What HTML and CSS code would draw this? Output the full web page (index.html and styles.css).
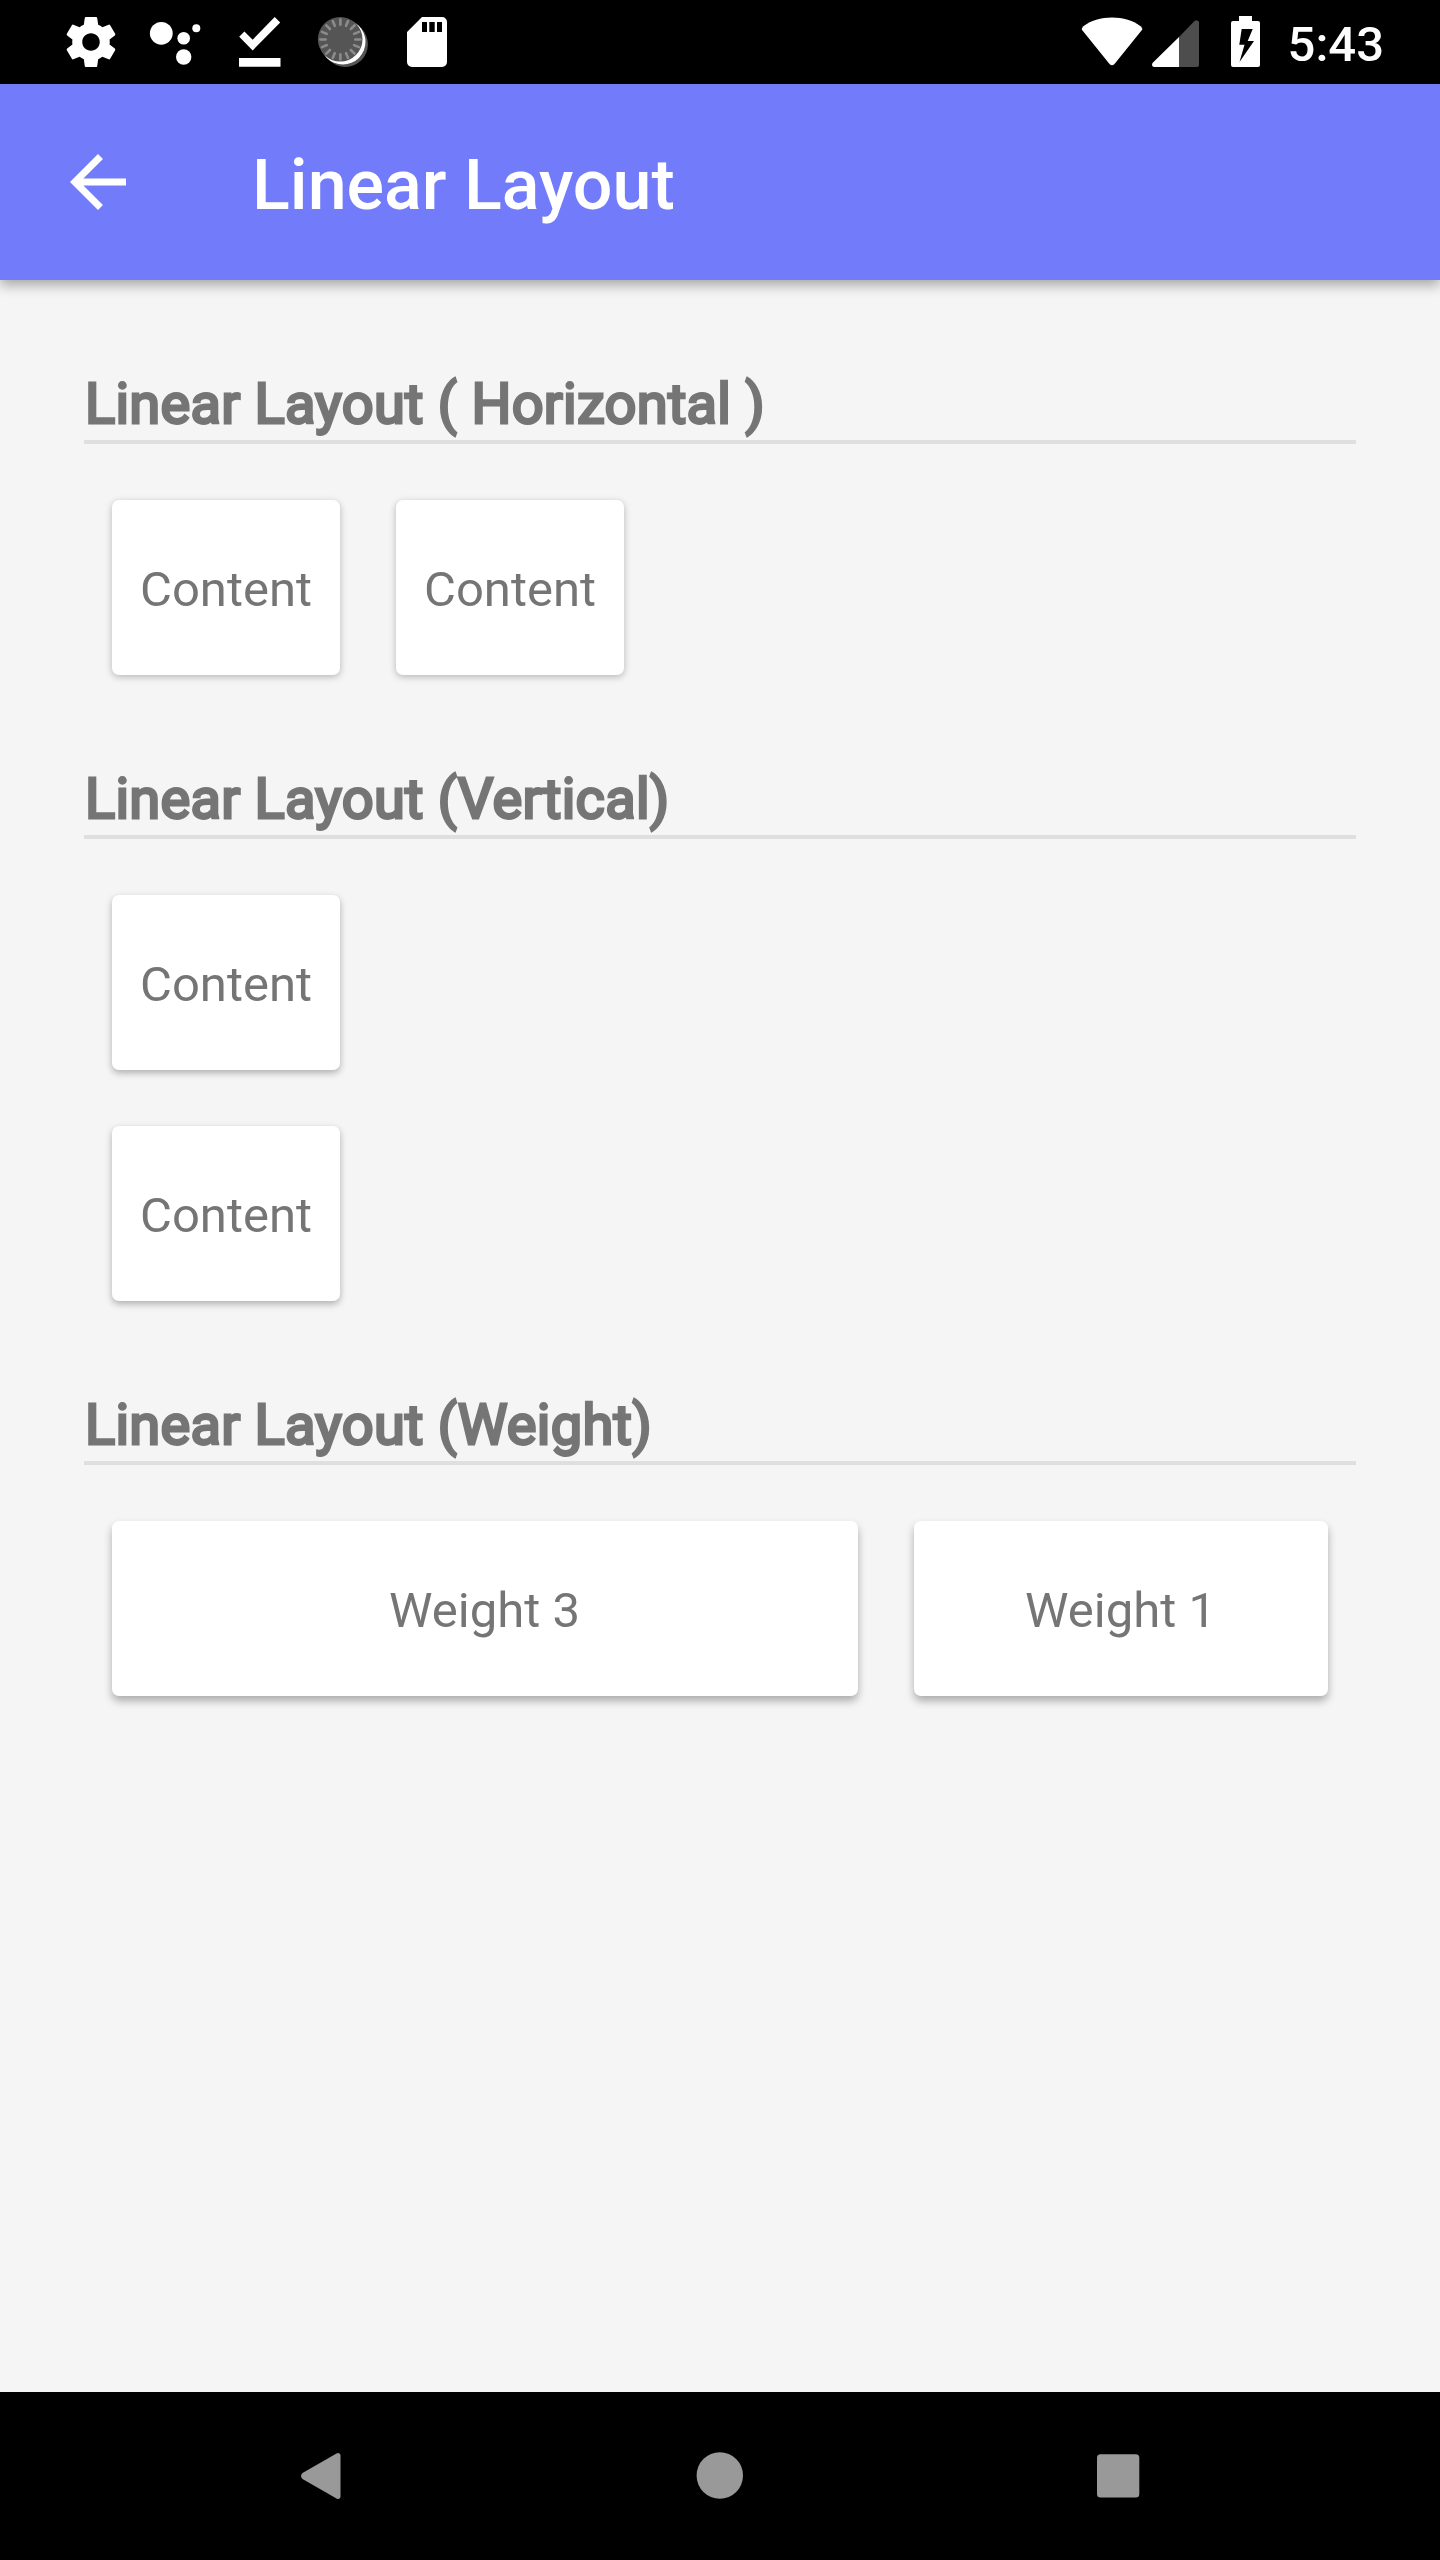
FILE: index.html
```html
<!DOCTYPE html>
<html lang="en">
<head>
<meta charset="utf-8">
<title>Linear Layout</title>
<link rel="stylesheet" href="styles.css">
</head>
<body>
<div class="screen">
  <div class="status-bar">
    <svg class="status-icons" width="400" height="84" viewBox="60 0 400 84" fill="#fff">
      <path transform="translate(61 12) scale(2.5)" d="M19.43 12.98c.04-.32.07-.64.07-.98s-.03-.66-.07-.98l2.11-1.65c.19-.15.24-.42.12-.64l-2-3.46c-.12-.22-.39-.3-.61-.22l-2.49 1c-.52-.4-1.08-.73-1.69-.98l-.38-2.65C14.46 2.18 14.25 2 14 2h-4c-.25 0-.46.18-.49.42l-.38 2.65c-.61.25-1.17.59-1.69.98l-2.49-1c-.23-.09-.49 0-.61.22l-2 3.46c-.13.22-.07.49.12.64l2.11 1.65c-.04.32-.07.65-.07.98s.03.66.07.98l-2.11 1.65c-.19.15-.24.42-.12.64l2 3.46c.12.22.39.3.61.22l2.49-1c.52.4 1.08.73 1.69.98l.38 2.65c.03.24.24.42.49.42h4c.25 0 .46-.18.49-.42l.38-2.65c.61-.25 1.17-.59 1.69-.98l2.49 1c.23.09.49 0 .61-.22l2-3.46c.12-.22.07-.49-.12-.64l-2.11-1.65zM12 15.5c-1.93 0-3.5-1.57-3.5-3.5s1.57-3.5 3.5-3.5 3.5 1.57 3.5 3.5-1.57 3.5-3.5 3.5z"/>
      <circle cx="161.3" cy="33.3" r="11.4"/>
      <circle cx="183.7" cy="38.3" r="6.3"/>
      <circle cx="196.3" cy="28.2" r="4"/>
      <circle cx="183.7" cy="57" r="7.7"/>
      <path d="M239.2 36.7l5.2-5.3 8.3 8.3L274.7 17l5.5 5.4-27.5 28zM239 58h41.5v8.8H239z"/>
      <circle cx="345.3" cy="44.3" r="22.6" fill="#555"/>
      <circle cx="342.8" cy="41.9" r="22.7"/>
      <circle cx="340.2" cy="39.3" r="22.3" fill="#555"/>
      <g stroke="#8c8c8c" stroke-width="2.6" stroke-linecap="round">
        <path id="tick" d="M340.4 19.5v5.2M340.4 54.3v5.2M320.4 39.5h5.2M355.2 39.5h5.2"/>
        <use href="#tick" transform="rotate(22.5 340.4 39.5)"/>
        <use href="#tick" transform="rotate(45 340.4 39.5)"/>
        <use href="#tick" transform="rotate(67.5 340.4 39.5)"/>
      </g>
      <path fill-rule="evenodd" d="M422 17h20a5 5 0 0 1 5 5v40a5 5 0 0 1-5 5h-30a5 5 0 0 1-5-5V32zM422 22v10h5V22zM429.3 22v10h5.4V22zM437 22v10h5V22z"/>
    </svg>
    <div class="status-end">
      <svg width="180" height="84" viewBox="1081 0 180 84" fill="#fff">
        <path d="M1083 26.5C1098 14.5 1126 14.5 1141 26.5Q1143 28.5 1141.5 30.5L1114.5 64Q1112 66.5 1109.5 64L1082.5 30.5Q1081 28.5 1083 26.5z"/>
        <path fill="#4d4d4d" d="M1179 37L1194.5 21Q1197 19 1199 22V65q0 2-2 2h-18z"/>
        <path d="M1179 37v30h-25q-3-1-1.5-4z"/>
        <path fill-rule="evenodd" d="M1239 16h13v5h6q2 0 2 2v42q0 2-2 2h-25q-2 0-2-2V23q0-2 2-2h6zM1241.7 29l-2.4 15.7h5.2L1239.5 62l14.5-21h-6.3l5-12z"/>
      </svg>
      <span class="clock">5:43</span>
    </div>
  </div>

  <header class="app-bar">
    <svg width="84" height="84" viewBox="0 0 24 24" fill="#fff"><path d="M20 11H7.83l5.59-5.59L12 4l-8 8 8 8 1.41-1.41L7.83 13H20v-2z"/></svg>
    <h1 class="app-title">Linear Layout</h1>
  </header>

  <main class="content">
    <section class="group">
      <h2 class="heading">Linear Layout ( Horizontal )</h2>
      <div class="cards">
        <div class="card">Content</div>
        <div class="card">Content</div>
      </div>
    </section>
    <section class="group">
      <h2 class="heading">Linear Layout (Vertical)</h2>
      <div class="cards cards-vertical">
        <div class="card mid">Content</div>
        <div class="card mid">Content</div>
      </div>
    </section>
    <section class="group">
      <h2 class="heading">Linear Layout (Weight)</h2>
      <div class="cards cards-weighted">
        <div class="card low">Weight 3</div>
        <div class="card low">Weight 1</div>
      </div>
    </section>
  </main>

  <nav class="nav-bar">
    <svg width="840" height="168" viewBox="300 2392 840 168" fill="#999">
      <path d="M340.5 2455v42q-1 3-4 1.5L302.5 2479q-3-3 0-6L336.5 2453.5q3-1.5 4 1.5z"/>
      <circle cx="719.8" cy="2475.5" r="23.2"/>
      <rect x="1097" y="2454.3" width="42.3" height="43.2" rx="3.5"/>
    </svg>
  </nav>
</div>
</body>
</html>
```
FILE: styles.css
```css
* { box-sizing: border-box; }

body {
  margin: 0;
  background: #f5f5f5;
  font-family: Roboto, "Liberation Sans", sans-serif;
}

svg { display: block; }

.screen {
  display: flex;
  flex-direction: column;
  width: 1440px;
  height: 2560px;
  overflow: hidden;
}

.status-bar {
  display: flex;
  justify-content: space-between;
  height: 84px;
  padding: 0 56px 0 60px;
  background: #000;
}

.status-end {
  display: flex;
  gap: 27px;
}

.clock {
  padding-top: 3px;
  color: #fff;
  font-size: 49px;
  font-weight: 500;
  line-height: 84px;
}

.app-bar {
  display: flex;
  align-items: center;
  gap: 112px;
  height: 196px;
  padding-left: 56px;
  background: #727cfb;
  box-shadow: 0 5px 12px rgba(0, 0, 0, .33);
}

.app-title {
  margin: 0;
  padding-top: 6px;
  color: #fff;
  font-size: 70px;
  font-weight: 500;
  line-height: 82px;
}

.content {
  display: flex;
  flex: 1;
  flex-direction: column;
  gap: 84px;
  padding: 84px;
}

.heading {
  height: 80px;
  margin: 0 0 56px;
  padding-left: 1px;
  border-bottom: 4px solid #dfdfdf;
  color: #757575;
  font-size: 56px;
  font-weight: 400;
  letter-spacing: .27px;
  line-height: 80px;
  -webkit-text-stroke: 2.8px #757575;
}

.cards {
  display: flex;
  gap: 56px;
  padding: 0 28px;
}

.cards-vertical {
  flex-direction: column;
  align-items: flex-start;
}

.cards-weighted {
  display: grid;
  grid-template-columns: 746fr 414fr;
}

.card {
  height: 175px;
  padding: 4px 28px 0;
  border-radius: 7px;
  background: #fff;
  box-shadow: 0 2px 7px rgba(0, 0, 0, .26);
  color: #757575;
  font-size: 49px;
  line-height: 172px;
  text-align: center;
}

.mid { box-shadow: 0 3px 7px rgba(0, 0, 0, .29); }

.low {
  padding-right: 29px;
  box-shadow: 0 5px 8px rgba(0, 0, 0, .30);
}

.nav-bar {
  display: flex;
  justify-content: center;
  height: 168px;
  background: #000;
}
```
